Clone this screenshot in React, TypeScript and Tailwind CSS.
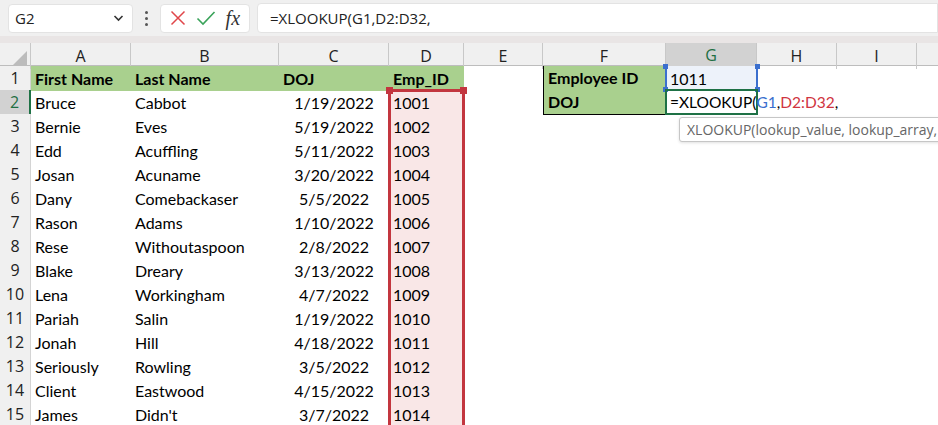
import React from 'react';

const rows: [string, string, string, string][] = [
  ['Bruce', 'Cabbot', '1/19/2022', '1001'],
  ['Bernie', 'Eves', '5/19/2022', '1002'],
  ['Edd', 'Acuffling', '5/11/2022', '1003'],
  ['Josan', 'Acuname', '3/20/2022', '1004'],
  ['Dany', 'Comebackaser', '5/5/2022', '1005'],
  ['Rason', 'Adams', '1/10/2022', '1006'],
  ['Rese', 'Withoutaspoon', '2/8/2022', '1007'],
  ['Blake', 'Dreary', '3/13/2022', '1008'],
  ['Lena', 'Workingham', '4/7/2022', '1009'],
  ['Pariah', 'Salin', '1/19/2022', '1010'],
  ['Jonah', 'Hill', '4/18/2022', '1011'],
  ['Seriously', 'Rowling', '3/5/2022', '1012'],
  ['Client', 'Eastwood', '4/15/2022', '1013'],
  ['James', "Didn't", '3/7/2022', '1014'],
];

const letters = ['A', 'B', 'C', 'D', 'E', 'F', 'G', 'H', 'I'];

const grid =
  'grid grid-cols-[31px_100px_148px_110px_75px_79px_123px_91px_80px_80px_1fr]';

function RowHead({ n, active }: { n: number; active?: boolean }) {
  return (
    <div
      className={`flex items-center justify-center border-b border-r border-[#d4d4d4] text-[16px] font-['Open_Sans',sans-serif] ${
        active ? 'bg-[#d2d2d2] text-[#1e6f42] border-r-2 border-r-[#1e7145]' : 'bg-[#f0f0f0] text-[#222]'
      }`}
    >
      {n}
    </div>
  );
}

export default function App() {
  return (
    <div className="w-[938px] h-[425px] overflow-hidden bg-white font-['Lato',sans-serif] text-black">
      {/* Formula bar */}
      <div className="h-[36px] bg-[#f0f0f0] flex items-center pl-[8px] gap-[0px]">
        <div className="w-[125px] h-[29px] bg-white rounded-[4px] border border-[#e3e3e3] flex items-center justify-between pl-[6px] pr-[8px] font-['Open_Sans',sans-serif] text-[15px] text-[#222]">
          <span>G2</span>
          <svg width="11" height="8" viewBox="0 0 11 8">
            <path d="M1.5 2 L5.5 6 L9.5 2" fill="none" stroke="#333" strokeWidth="1.6" />
          </svg>
        </div>
        <div className="w-[27px] flex flex-col items-center gap-[3px]">
          <span className="w-[3px] h-[3px] bg-[#555] rounded-full" />
          <span className="w-[3px] h-[3px] bg-[#555] rounded-full" />
          <span className="w-[3px] h-[3px] bg-[#555] rounded-full" />
        </div>
        <div className="w-[90px] h-[29px] bg-white rounded-[4px] border border-[#e3e3e3] flex items-center justify-around px-[4px]">
          <svg width="16" height="16" viewBox="0 0 16 16">
            <path d="M1.5 1.5 L14.5 14.5 M14.5 1.5 L1.5 14.5" stroke="#e0464a" strokeWidth="1.5" />
          </svg>
          <svg width="20" height="16" viewBox="0 0 20 16">
            <path d="M1.5 8.5 L7 14 L18.5 2" fill="none" stroke="#3aa35a" strokeWidth="1.6" />
          </svg>
          <span className="font-['Liberation_Serif',serif] italic text-[20px] text-[#333] leading-none">fx</span>
        </div>
        <div className="ml-[7px] flex-1 h-[30px] bg-white rounded-l-[4px] border border-[#e3e3e3] flex items-center pl-[12px] font-['Open_Sans',sans-serif] text-[15px] text-[#222]">
          =XLOOKUP(G1,D2:D32,
        </div>
      </div>
      <div className="h-[7px] bg-[#e9e5e5]" />

      {/* Sheet */}
      <div className="relative">
        {/* column headers */}
        <div className={`${grid} h-[23px] bg-[#f0f0f0] border-b border-[#bdbdbd]`}>
          <div className="relative border-r border-[#c8c8c8]">
            <svg className="absolute right-[3px] bottom-[3px]" width="15" height="15" viewBox="0 0 15 15">
              <polygon points="15,0 15,15 0,15" fill="#bcbcbc" />
            </svg>
          </div>
          {letters.map((l) => (
            <div
              key={l}
              className={`flex items-center justify-center border-r border-[#c8c8c8] font-['Open_Sans',sans-serif] text-[16px] ${
                l === 'G' ? 'bg-[#d2d2d2] text-[#1e6f42] border-b-2 border-b-[#1e7145]' : 'text-[#222]'
              }`}
            >
              {l}
            </div>
          ))}
          <div />
        </div>

        {/* row 1 */}
        <div className={`${grid} h-[24px] text-[16px]`}>
          <RowHead n={1} />
          <div className="bg-[#a9d08e] font-bold pl-[4px] flex items-center">First Name</div>
          <div className="bg-[#a9d08e] font-bold pl-[4px] flex items-center">Last Name</div>
          <div className="bg-[#a9d08e] font-bold pl-[4px] flex items-center">DOJ</div>
          <div className="bg-[#a9d08e] font-bold pl-[4px] flex items-center">Emp_ID</div>
          <div />
          <div className="bg-[#a9d08e] font-bold pl-[4px] flex items-center border-l border-r border-b border-black">
            Employee ID
          </div>
          <div className="bg-[#edf2fa] pl-[4px] flex items-center">1011</div>
          <div />
          <div />
          <div />
        </div>

        {/* data rows */}
        {rows.map((r, i) => (
          <div key={i} className={`${grid} h-[24px] text-[16px]`}>
            <RowHead n={i + 2} active={i === 0} />
            <div className="pl-[4px] flex items-center whitespace-nowrap">{r[0]}</div>
            <div className="pl-[4px] flex items-center whitespace-nowrap">{r[1]}</div>
            <div className="flex items-center justify-center">{r[2]}</div>
            <div className="bg-[#f9e7e7] pl-[4px] flex items-center">{r[3]}</div>
            <div />
            {i === 0 ? (
              <>
                <div className="bg-[#a9d08e] font-bold pl-[4px] flex items-center border-l border-r border-b border-black">DOJ</div>
                <div className="relative z-20 pl-[4px] flex items-center whitespace-nowrap overflow-visible text-[15.5px]">
                  <span>=XLOOKUP(</span>
                  <span className="text-[#3b6fce]">G1</span>
                  <span>,</span>
                  <span className="text-[#d0343f]">D2:D32</span>
                  <span>,</span>
                  <span className="inline-block w-[1px] h-[18px] bg-black ml-[1px]" />
                </div>
              </>
            ) : (
              <>
                <div />
                <div />
              </>
            )}
            <div />
            <div />
            <div />
          </div>
        ))}

        {/* D2:D32 reference highlight */}
        <div className="absolute left-[388px] top-[46px] w-[77px] h-[400px] border-[3px] border-[#c3363f] pointer-events-none" />
        <div className="absolute left-[386px] top-[44px] w-[7px] h-[7px] bg-[#c3363f]" />
        <div className="absolute left-[460px] top-[44px] w-[7px] h-[7px] bg-[#c3363f]" />

        {/* G1 reference highlight */}
        <div className="absolute left-[665px] top-[23px] w-[93px] h-[24px] border-l-2 border-r-2 border-[#3b6fce]" />
        <div className="absolute left-[663px] top-[21px] w-[5px] h-[5px] bg-[#3b6fce]" />
        <div className="absolute left-[755px] top-[21px] w-[5px] h-[5px] bg-[#3b6fce]" />
        <div className="absolute left-[663px] top-[44px] w-[5px] h-[5px] bg-[#3b6fce]" />
        <div className="absolute left-[755px] top-[44px] w-[5px] h-[5px] bg-[#3b6fce]" />

        {/* G2 active cell */}
        <div className="absolute z-10 left-[665px] top-[46px] w-[93px] h-[26px] border-2 border-[#1e7145] pointer-events-none" />

        {/* function tooltip */}
        <div className="absolute z-30 left-[679px] top-[74px] w-[264px] h-[25px] bg-white border border-[#c6c6c6] rounded-[3px] shadow-[0_1px_3px_rgba(0,0,0,0.12)] flex items-center pl-[7px] font-['Open_Sans',sans-serif] text-[14px] text-[#666] whitespace-nowrap">
          XLOOKUP(lookup_value, lookup_array,
        </div>
      </div>
    </div>
  );
}
